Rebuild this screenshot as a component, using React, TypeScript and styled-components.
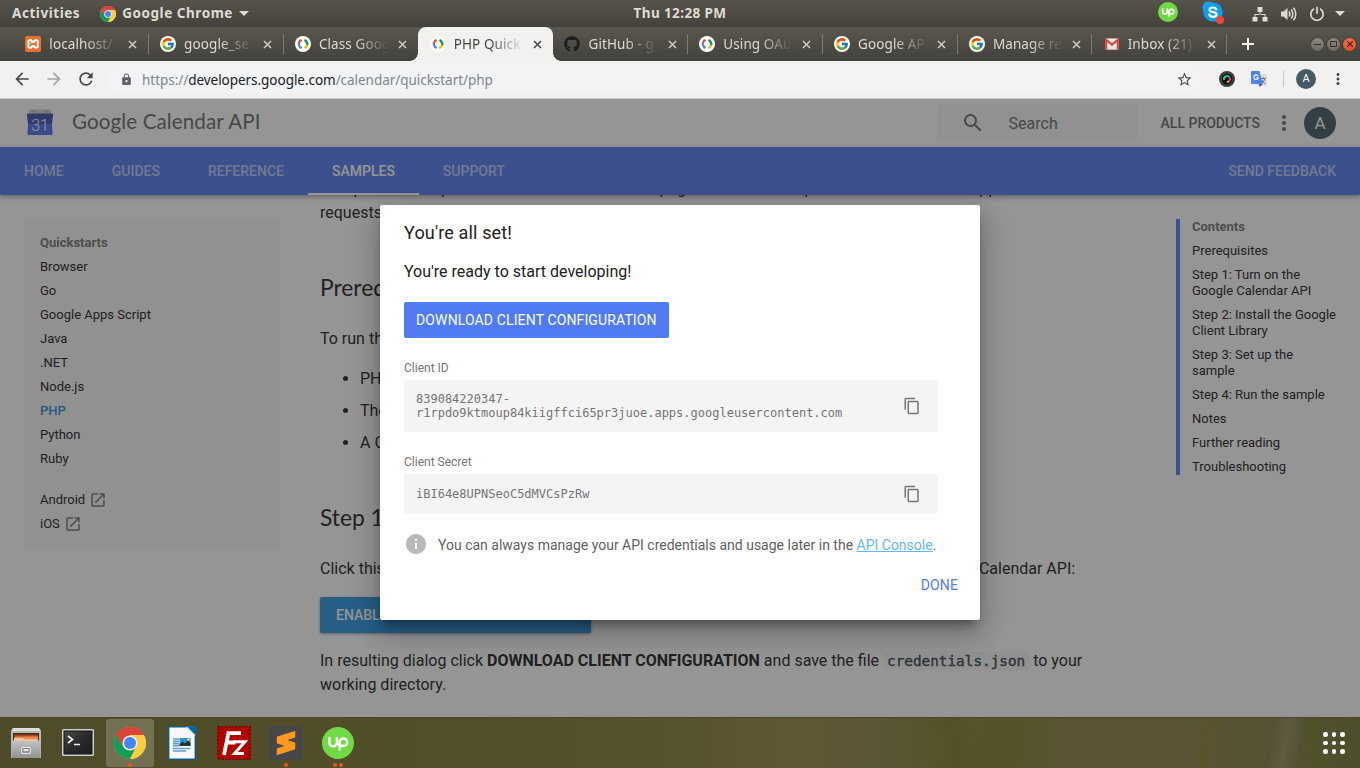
import React from 'react';
import styled, { createGlobalStyle, css } from 'styled-components';
import {
  MdArrowBack, MdArrowForward, MdContentCopy, MdInfo, MdLock, MdMoreVert,
  MdOpenInNew, MdRefresh, MdSearch, MdStarBorder,
} from 'react-icons/md';
import { FcGoogle } from 'react-icons/fc';
import { FaGithub } from 'react-icons/fa';
import { SiSublimetext, SiXampp } from 'react-icons/si';

const GlobalStyle = createGlobalStyle`
  * { box-sizing: border-box; }
  body { margin: 0; overflow: hidden; }
  svg { display: block; flex: none; }
`;

const uiFont = '"Noto Sans", "Open Sans", sans-serif';
const headingFont = 'Lato, Roboto, sans-serif';

const Desktop = styled.div`
  width: 1360px;
  height: 768px;
  display: flex;
  flex-direction: column;
  overflow: hidden;
  font-family: Roboto, sans-serif;
`;

/* ---------- System bar ---------- */

const SystemBar = styled.header`
  flex: none;
  height: 27px;
  display: grid;
  grid-template-columns: 1fr auto 1fr;
  align-items: center;
  background: linear-gradient(#56534b, #44423c);
  color: #dfdbd2;
  font: 700 13.5px/27px ${uiFont};
  white-space: nowrap;
`;

const SystemMenu = styled.div`
  display: flex;
  align-items: center;
  padding-left: 12px;
`;

const SystemLabel = styled.span<{ $spacing?: number }>`
  letter-spacing: ${p => p.$spacing ?? 0.5}px;
`;

const AppMenu = styled.div`
  display: flex;
  align-items: center;
  margin-left: 20px;
  gap: 6px;
`;

const Caret = styled.i`
  border: 5px solid transparent;
  border-top-color: #dfdbd2;
  border-bottom: 0;
`;

const SystemTray = styled.div`
  display: flex;
  align-items: center;
  justify-content: flex-end;
  padding-right: 15px;
`;

const TrayItem = styled.span<{ $gap: number; $raise?: number }>`
  display: flex;
  margin-left: ${p => p.$gap}px;
  padding-bottom: ${p => p.$raise ?? 0}px;
`;

/* ---------- Tabs ---------- */

const TabStrip = styled.div`
  flex: none;
  height: 34px;
  display: flex;
  align-items: stretch;
  padding-left: 14px;
  background: linear-gradient(#59574e, #43413c);
`;

const BrowserTab = styled.div<{ $active?: boolean; $divider?: boolean }>`
  position: relative;
  flex: none;
  width: 134.8px;
  display: flex;
  align-items: center;
  padding-left: 11.3px;
  color: #dfdbd2;
  font: 13.5px/34px ${uiFont};
  ${p => p.$divider && css`
    background: linear-gradient(#7d7b74, #7d7b74) right 0 top 7px / 1px 20px no-repeat;
  `}
  ${p => p.$active && css`
    background: #f2f1f0;
    color: #46443f;
    border-radius: 8px 8px 0 0;
    &::before, &::after {
      content: '';
      position: absolute;
      bottom: 0;
      width: 8px;
      height: 8px;
    }
    &::before { left: -8px; background: radial-gradient(circle at 0 0, transparent 7.5px, #f2f1f0 8px); }
    &::after { right: -8px; background: radial-gradient(circle at 100% 0, transparent 7.5px, #f2f1f0 8px); }
  `}
`;

const TabTitle = styled.span`
  width: 72px;
  margin-left: 8px;
  white-space: nowrap;
  letter-spacing: .1px;
  mask-image: linear-gradient(90deg, #000 50%, transparent 97%);
`;

const TabClose = styled.span`
  display: flex;
  margin-left: 7.2px;
`;

const Favicon = styled.span<{ $round?: boolean }>`
  flex: none;
  width: 16px;
  height: 16px;
  display: flex;
  align-items: center;
  justify-content: center;
  ${p => p.$round && css`background: #fff; border-radius: 50%;`}
`;

const NewTab = styled.div`
  display: flex;
  align-items: center;
  margin-left: 14.5px;
`;

const WindowControls = styled.div`
  display: flex;
  align-items: center;
  gap: 3px;
  margin-left: auto;
  padding-right: 4px;
`;

const WindowButton = styled.span<{ $close?: boolean }>`
  width: 13px;
  height: 13px;
  display: flex;
  align-items: center;
  justify-content: center;
  border-radius: 50%;
  background: ${p => (p.$close ? 'linear-gradient(#f46d4b, #e2502b)' : 'linear-gradient(#8b897f, #6c6a62)')};
  box-shadow: 0 0 0 .5px #33322d;
`;

/* ---------- Toolbar ---------- */

const Toolbar = styled.div`
  flex: none;
  height: 38px;
  display: flex;
  align-items: center;
  padding: 0 12px 1px 12px;
  background: #f2f1f0;
  border-bottom: 1px solid #c6c8c9;
`;

const NavButton = styled.span`
  display: flex;
  width: 32px;
`;

const AddressBar = styled.div`
  display: flex;
  align-items: center;
  flex: none;
  width: 1094px;
  height: 28px;
  border-radius: 14px;
  background: #f1f3f4;
  padding: 0 9px 0 12px;
  color: #80868b;
  font: 13.5px/28px ${uiFont};
`;

const Url = styled.span`
  margin-left: 9px;
  padding-top: 2px;
  flex: 1;
  letter-spacing: -.04px;
  b { font-weight: 400; color: #202124; }
`;

const Extensions = styled.div`
  display: flex;
  align-items: center;
  margin-left: 17px;
  flex: 1;
`;

const ToolbarRule = styled.i`
  width: 1px;
  height: 16px;
  background: #c9cacb;
  margin: 0 12px 0 16px;
`;

const Avatar = styled.span<{ $size: number; $font: number }>`
  flex: none;
  width: ${p => p.$size}px;
  height: ${p => p.$size}px;
  border-radius: 50%;
  background: #455a64;
  color: #fff;
  text-align: center;
  font: ${p => p.$font}px/${p => p.$size}px Roboto, sans-serif;
`;

/* ---------- Documentation page ---------- */

const Page = styled.div`
  position: relative;
  flex: none;
  height: 618px;
  display: flex;
  flex-direction: column;
  overflow: hidden;
  background: #fff;
  color: #212121;
`;

const ProductHeader = styled.div`
  flex: none;
  height: 48px;
  display: flex;
  align-items: center;
  padding: 0 24px;
`;

const ProductTitle = styled.h1`
  margin: 0 auto 0 16px;
  color: #6a6a6a;
  font: 400 20.6px/45px ${headingFont};
  letter-spacing: .1px;
  padding-bottom: 3px;
`;

const SearchBox = styled.div`
  width: 200px;
  height: 36px;
  display: flex;
  align-items: center;
  padding-left: 24px;
  gap: 24px;
  background: #f7f7f7;
  color: #6a6a6a;
  font-size: 16px;
`;

const AllProducts = styled.span`
  margin: 0 12px 0 24px;
  color: #6a6a6a;
  font-size: 14px;
  font-weight: 500;
`;

const NavBar = styled.nav`
  position: relative;
  z-index: 1;
  flex: none;
  height: 48px;
  display: flex;
  background: #577bf1;
  box-shadow: 0 2px 5px rgba(0, 0, 0, .35);
`;

const NavTab = styled.a<{ $active?: boolean; $end?: boolean }>`
  height: 48px;
  padding: 0 24px;
  color: ${p => (p.$active ? '#fff' : 'rgba(255, 255, 255, .6)')};
  font-size: 14px;
  font-weight: 500;
  line-height: 49px;
  ${p => p.$active && css`box-shadow: inset 0 -2px #fff;`}
  ${p => p.$end && css`margin-left: auto;`}
`;

const Body = styled.div`
  flex: 1;
  min-height: 0;
  display: flex;
  align-items: flex-start;
  padding: 0 24px;
`;

const SideNav = styled.aside`
  width: 256px;
  margin-top: 24px;
  padding: 12px 16px 12px;
  background: #f7f7f7;
  font-size: 13px;
  line-height: 24px;
`;

const SideHeading = styled.div`
  color: #757575;
  font-weight: 700;
`;

const SideItem = styled.div<{ $active?: boolean; $spaced?: boolean }>`
  display: flex;
  align-items: center;
  gap: 4px;
  ${p => p.$active && css`color: #1a92dc; font-weight: 500;`}
  ${p => p.$spaced && css`margin-top: 17px;`}
  svg { color: #757575; }
`;

const Article = styled.main`
  width: 808px;
  margin: -18px 0 0 40px;
  font-size: 16px;
  line-height: 24px;
  p { margin: 0; }
`;

const Intro = styled.p`
  white-space: nowrap;
`;

const SectionTitle = styled.h2`
  margin: 46px 0 24px;
  font: 400 22.8px/32px ${headingFont};
`;

const BulletList = styled.ul`
  margin: 16px 0;
  padding-left: 40px;
  li + li { margin-top: 8px; }
`;

const EnableButton = styled.div`
  width: 271px;
  height: 36px;
  margin: 16px 0;
  padding: 0 16px;
  border-radius: 2px;
  background: #2c98e4;
  color: #fff;
  font-size: 14px;
  font-weight: 500;
  line-height: 36px;
  white-space: nowrap;
  box-shadow: 0 1px 3px rgba(0, 0, 0, .4);
`;

const Code = styled.code`
  padding: 1px 4px;
  background: #f7f7f7;
  color: #37474f;
  font: 14.35px/20px "DejaVu Sans Mono", monospace;
  -webkit-text-stroke: .4px #37474f;
`;

const Contents = styled.aside`
  width: 160px;
  margin: 24px 0 0 auto;
  padding-left: 12px;
  border-left: 4px solid #577bf1;
  display: flex;
  flex-direction: column;
  gap: 8px;
  font-size: 13px;
  line-height: 16px;
  b { color: #757575; }
`;

/* ---------- Dialog ---------- */

const Scrim = styled.div`
  position: absolute;
  inset: 0;
  z-index: 2;
  display: flex;
  justify-content: center;
  align-items: flex-start;
  padding-top: 106px;
  background: rgba(33, 33, 33, .48);
`;

const Dialog = styled.section`
  width: 600px;
  height: 415px;
  padding: 16px 22px 0 24px;
  border-radius: 2px;
  background: #fff;
  box-shadow: 0 16px 24px 2px rgba(0, 0, 0, .14), 0 6px 30px 5px rgba(0, 0, 0, .12), 0 8px 10px -5px rgba(0, 0, 0, .4);
  display: flex;
  flex-direction: column;
  align-items: flex-start;
`;

const DialogTitle = styled.div`
  font-size: 18px;
  line-height: 24px;
  letter-spacing: .15px;
`;

const DialogLead = styled.div`
  margin: 15px 0 18px;
  font-size: 16px;
  line-height: 24px;
`;

const PrimaryButton = styled.div`
  height: 36px;
  padding: 0 12px;
  border-radius: 2px;
  background: #507bf3;
  color: #fff;
  font-size: 14px;
  line-height: 37px;
  letter-spacing: .13px;
`;

const FieldLabel = styled.div`
  margin-top: 22px;
  color: #757575;
  font-size: 12px;
  line-height: 16px;
`;

const Field = styled.div<{ $height: number }>`
  width: 534px;
  height: ${p => p.$height}px;
  margin-top: 4px;
  padding: 0 17px 0 12px;
  display: flex;
  align-items: center;
  justify-content: space-between;
  border-radius: 3px;
  background: #f4f4f4;
  color: #757575;
  font: 12px/14px "DejaVu Sans Mono", monospace;
`;

const Note = styled.div`
  display: flex;
  align-items: center;
  gap: 10px;
  margin-top: 18px;
  height: 24px;
  color: #616161;
  font-size: 14px;
  svg { color: #b9b9b9; }
  span { padding-top: 2px; }
  a { color: #64b9f4; text-decoration: underline; }
`;

const DoneButton = styled.div`
  align-self: flex-end;
  margin-top: 17px;
  color: #507bf3;
  font-size: 14px;
  line-height: 24px;
  letter-spacing: .1px;
`;

/* ---------- Dock ---------- */

const Dock = styled.footer`
  flex: 1;
  display: flex;
  align-items: center;
  padding: 0 10px 0 2px;
  gap: 4px;
  border-top: 1px solid #47452b;
  background:
    linear-gradient(100deg, transparent 93.2%, rgba(107, 98, 78, .5) 94.2%, transparent 95.4%),
    linear-gradient(80deg, transparent 95.5%, rgba(78, 84, 35, .6) 96.5%, transparent 97.5%),
    linear-gradient(100deg, transparent 87.5%, rgba(91, 83, 31, .5) 88.5%, transparent 89.5%),
    linear-gradient(75deg, transparent 68%, rgba(80, 82, 36, .5) 70%, transparent 72%),
    linear-gradient(105deg, transparent 71%, rgba(82, 83, 36, .35) 74.5%, transparent 77%),
    linear-gradient(90deg, #4f4c2a 0%, #514f29 30%, #55522c 48%, #5f5833 58%, #5b5637 64%, #565329 70%, #5a5433 80%, #5a5436 88%, #555234 94%, #4e4d2b 100%);
`;

const DockItem = styled.div<{ $active?: boolean }>`
  position: relative;
  width: 48px;
  height: 48px;
  display: flex;
  align-items: center;
  justify-content: center;
  border-radius: 3px;
  background: ${p => (p.$active ? 'rgba(255, 255, 255, .2)' : 'none')};
`;

const RunningDots = styled.span`
  position: absolute;
  left: 0;
  right: 0;
  bottom: 0;
  display: flex;
  justify-content: center;
  gap: 2px;
  i { width: 4px; height: 4px; border-radius: 50%; background: #e95420; }
`;

const AppGrid = styled.div`
  display: grid;
  grid-template-columns: repeat(3, 4.6px);
  gap: 4px;
  margin-left: auto;
  padding: 0 5px 0 0;
  i { width: 4.6px; height: 4.6px; border-radius: 50%; background: #fff; }
`;

/* ---------- Drawings ---------- */

const ChromeLogo = ({ size }: { size: number }) => (
  <svg width={size} height={size} viewBox="0 0 48 48">
    <circle cx="24" cy="24" r="24" fill="#fcc934" />
    <path d="M3.2 12A24 24 0 0 1 44.8 12L24 13 14.5 29.5Z" fill="#db4437" />
    <path d="M3.2 12A24 24 0 0 0 24 48L33.5 29.5 14.5 29.5Z" fill="#0f9d58" />
    <path d="M44.8 12A24 24 0 0 1 24 48L33.5 29.5 24 13.5V12Z" fill="#fdcd40" />
    <path d="M24 12H44.8A24 24 0 0 0 3.2 12L13.6 30Z" fill="#db4437" />
    <circle cx="24" cy="24" r="11.4" fill="#f1f1f1" />
    <circle cx="24" cy="24" r="9" fill="#4285f4" />
  </svg>
);

const DevelopersIcon = () => (
  <Favicon $round>
    <svg width="12" height="10" viewBox="0 0 12 10" fill="none" strokeWidth="2.1">
      <path d="M4.6 1 3 1.8 1.5 5" stroke="#ea4335" />
      <path d="M1.5 4.6 3 8 4.6 9" stroke="#4285f4" />
      <path d="M7.4 1 9 1.8 10.5 5" stroke="#0f9d58" />
      <path d="M10.5 4.8 9 8 7.4 9" stroke="#fbbc05" />
      <path d="M8.6 1.400 10.5 5 10 6.200" stroke="#0f9d58" />
    </svg>
  </Favicon>
);

const GoogleIcon = () => (
  <Favicon $round><FcGoogle size={14} /></Favicon>
);

const XamppIcon = () => (
  <svg width="16" height="16" viewBox="0 0 16 16">
    <rect x=".5" y=".5" width="15" height="15" rx="2" fill="#fff" />
    <SiXampp size={16} color="#ee6f2d" />
  </svg>
);

const GmailIcon = () => (
  <svg width="16" height="16" viewBox="0 0 16 16">
    <rect x="1" y="2.500" width="14" height="11" rx="1" fill="#f2f2f2" />
    <path d="M3 13.500 8 8l5 5.500z" fill="#dcdcdc" />
    <path d="M2.200 13.500V3.800L8 8.600l5.800-4.800v9.700" fill="none" stroke="#dc4538" strokeWidth="2.200" />
  </svg>
);

const UpworkIcon = ({ size }: { size: number }) => (
  <svg width={size} height={size} viewBox="0 0 32 32">
    <circle cx="16" cy="16" r="16" fill="#6fda44" />
    <path d="M7.500 11v4.700a3.700 3.700 0 0 0 7.400 0V11M17.600 22.500v-7.200a3.800 3.800 0 1 1 3.800 3.800c-2.300 0-4.300-1.300-5.300-3.200" fill="none" stroke="#fff" strokeWidth="2.500" strokeLinecap="round" />
  </svg>
);

const SkypeIcon = () => (
  <svg width="22" height="23" viewBox="0 0 22 23">
    <circle cx="6.500" cy="6.500" r="6" fill="#12a5f4" />
    <circle cx="14.500" cy="14.500" r="6.500" fill="#0078d4" />
    <circle cx="11" cy="11" r="9.600" fill="#0d9fec" />
    <path d="M14.300 8.300c-.6-1.300-1.800-1.800-3.400-1.800-1.800 0-3.300.8-3.300 2.300 0 3.300 7 1.400 7 4.500 0 1.600-1.600 2.500-3.500 2.500-1.900 0-3.300-.8-3.800-2.200" fill="none" stroke="#fff" strokeWidth="2.200" strokeLinecap="round" />
    <circle cx="18" cy="19" r="4" fill="#f44336" />
  </svg>
);

const NetworkIcon = () => (
  <svg width="16" height="16" viewBox="0 0 16 16" fill="#dfdbd2">
    <path d="M5.500 1h5v5h-5zM.5 11h5v4.500h-5zM10.500 11h5v4.500h-5zM2.500 8h11v3.500h-1V9h-4V6h-1v3h-4v2.500h-1z" />
  </svg>
);

const VolumeIcon = () => (
  <svg width="17" height="16" viewBox="0 0 17 16" fill="none" stroke="#dfdbd2" strokeWidth="1.500">
    <path d="M1 5.500h2.500L7.500 2v12l-4-3.500H1z" fill="#dfdbd2" stroke="none" />
    <path d="M9 5.500c1 1.400 1 3.600 0 5M11.200 3.600c2.200 2.400 2.200 6.400 0 8.800M13.400 1.800c3.200 3.400 3.200 9 0 12.400" />
  </svg>
);

const PowerIcon = () => (
  <svg width="16" height="16" viewBox="0 0 16 16" fill="none" stroke="#dfdbd2" strokeWidth="1.700">
    <path d="M5 2.700a6.200 6.200 0 1 0 6 0M8 .8v7" />
  </svg>
);

const CloseGlyph = ({ color }: { color: string }) => (
  <svg width="9" height="9" viewBox="0 0 9 9">
    <path d="M1 1l7 7M8 1L1 8" stroke={color} strokeWidth="1.500" />
  </svg>
);

const CalendarLogo = () => (
  <svg width="32" height="32" viewBox="0 0 32 32">
    <path d="M5 3.500 Q5 2.500 6 2.500H26Q27 2.500 27 3.500V8H5z" fill="#d0d0d0" />
    <circle cx="9.500" cy="4.500" r=".9" fill="#9e9e9e" />
    <circle cx="22.500" cy="4.500" r=".9" fill="#9e9e9e" />
    <path d="M4 6.500h24q1.200 0 1.100 1.200L28 17H4L2.900 7.700Q2.800 6.500 4 6.500z" fill="#3f51b5" />
    <path d="M4 17h24l.6 9.800q0 1.200-1.200 1.200H4.600q-1.200 0-1.200-1.200z" fill="#5270ee" />
    <text x="16" y="23.500" textAnchor="middle" fill="#fff" fontFamily="Roboto" fontSize="16" fontWeight="300">31</text>
  </svg>
);

const ColorCameraIcon = () => (
  <svg width="16" height="16" viewBox="0 0 16 16">
    <circle cx="8" cy="8" r="8" fill="#3b3e42" />
    <circle cx="8" cy="8" r="5.200" fill="#08090b" />
    <g fill="none" strokeWidth="2">
      <path d="M5.200 9a3 3 0 0 1 1.800-3.800" stroke="#32d64b" />
      <path d="M7 5.200a3 3 0 0 1 3.500 1.100" stroke="#22a8e8" />
      <path d="M10.500 6.300A3 3 0 0 1 10 10.200" stroke="#e93a6a" />
      <path d="M10 10.200a3 3 0 0 1-2 .7" stroke="#e8c51e" />
    </g>
  </svg>
);

const TranslateIcon = () => (
  <svg width="16" height="16" viewBox="0 0 16 16">
    <rect x="6" y="3" width="10" height="12" rx="1" fill="#dcdcdc" />
    <path d="M9.500 7.500h5.500M12.200 6v1.500M10.500 12.500c2-1 3-2.800 3.300-5M10.800 9c.8 1.800 2 3 3.700 3.600" stroke="#607d8b" strokeWidth="1.100" fill="none" />
    <path d="M1 0h7.500l3 13H1q-1 0-1-1V1q0-1 1-1z" fill="#4e82ee" />
    <path d="M8 13h3.500L8.800 16z" fill="#3a3fc0" />
    <path d="M7 4.800A2.300 2.300 0 1 0 7.400 6.700H5.200" stroke="#fff" strokeWidth="1.100" fill="none" />
  </svg>
);

const FilesIcon = () => (
  <svg width="32" height="34" viewBox="0 0 32 34">
    <defs>
      <linearGradient id="cabinet" x2="0" y2="1"><stop stopColor="#c4c4c4" /><stop offset="1" stopColor="#929292" /></linearGradient>
    </defs>
    <path d="M3 2h26l2 3v27H1V5z" fill="#b9b9b6" />
    <path d="M3 2h26l1.500 3h-29z" fill="#deded9" />
    <rect x="3" y="7" width="26" height="8" fill="#3a2d26" />
    <path d="M4 8.500h24v7H4z" fill="#a8441b" />
    <path d="M5 10.500h23v5H5z" fill="#f08a4a" />
    <path d="M4 12h9l1 1.200h14v3H4z" fill="#f7c7a2" />
    <rect x="1.500" y="14.500" width="29" height="17.500" rx="1" fill="url(#cabinet)" />
    <rect x="11.800" y="21.500" width="8.400" height="5.800" rx="1" fill="#777" stroke="#ececec" strokeWidth="1.200" />
    <rect x="13.500" y="23" width="5" height="2.300" fill="#e8e8e8" />
  </svg>
);

const TerminalIcon = () => (
  <svg width="32" height="28" viewBox="0 0 32 28">
    <defs>
      <linearGradient id="screen" x2="1" y2="1"><stop stopColor="#4b4b4b" /><stop offset=".5" stopColor="#2a2a2a" /><stop offset="1" stopColor="#1d1d1d" /></linearGradient>
    </defs>
    <rect width="32" height="27" rx="1.500" fill="#cfcfcd" />
    <rect x="2" y="2" width="28" height="23" fill="url(#screen)" stroke="#111" />
    <path d="M6 7l4.500 3.500L6 14M12 15.500h6" fill="none" stroke="#f0f0f0" strokeWidth="1.700" />
  </svg>
);

const WriterIcon = () => (
  <svg width="28" height="34" viewBox="0 0 28 34">
    <path d="M.7.700h18.500L27.300 9v24.300H.7z" fill="#f8f8f8" stroke="#0b5c8e" strokeWidth="1.400" />
    <path d="M18.500 0H28v10z" fill="#0469a8" />
    <path d="M18.500 1L27 9.500" stroke="#cfe3ef" strokeWidth="1.200" />
    <path d="M5 13h6M5 15.200h6M5 17.400h6M5 19.600h6M5 22.500h17.500M5 25h13" stroke="#5f9fca" strokeWidth="1.600" />
    <rect x="11.500" y="12" width="11" height="8" fill="#2f93d4" />
    <path d="M11.500 18.500l3-3 2.500 2 3-3 2.500 2.500V20h-11z" fill="#26352c" />
    <circle cx="20.500" cy="13.500" r="1.300" fill="#f7d547" />
  </svg>
);

const FilezillaIcon = () => (
  <svg width="34" height="34" viewBox="0 0 34 34">
    <rect x=".8" y=".8" width="32.400" height="32.400" fill="#b30000" stroke="#7e0000" strokeWidth="1.600" strokeDasharray="2 1.500" />
    <path d="M10 7.200h14M11.800 5.300 7 28.800M9.500 16.500h9" fill="none" stroke="#fff" strokeWidth="3.800" />
    <path d="M16.500 15.800h11.500L17.500 27.500h9.500" fill="none" stroke="#fff" strokeWidth="3" />
  </svg>
);

const SublimeIcon = () => (
  <svg width="34" height="34" viewBox="0 0 34 34">
    <rect width="34" height="34" rx="2" fill="#474747" />
    <SiSublimetext x="5" y="5" size={24} color="#ff9a1f" />
  </svg>
);

/* ---------- Data ---------- */

const browserTabs: { title: string; icon: React.ReactNode; active?: boolean; divider?: boolean }[] = [
  { title: 'localhost/', icon: <XamppIcon />, divider: true },
  { title: 'google_se', icon: <GoogleIcon />, divider: true },
  { title: 'Class Goog', icon: <DevelopersIcon /> },
  { title: 'PHP Quick', icon: <DevelopersIcon />, active: true },
  { title: 'GitHub - g', icon: <FaGithub size={16} color="#1d1d1b" />, divider: true },
  { title: 'Using OAu', icon: <DevelopersIcon />, divider: true },
  { title: 'Google AP', icon: <GoogleIcon />, divider: true },
  { title: 'Manage re', icon: <GoogleIcon />, divider: true },
  { title: 'Inbox (21)', icon: <GmailIcon />, divider: true },
];

const navTabs = ['HOME', 'GUIDES', 'REFERENCE', 'SAMPLES', 'SUPPORT'];
const quickstarts = ['Browser', 'Go', 'Google Apps Script', 'Java', '.NET', 'Node.js', 'PHP', 'Python', 'Ruby'];
const contents = [
  'Prerequisites', 'Step 1: Turn on the Google Calendar API', 'Step 2: Install the Google Client Library',
  'Step 3: Set up the sample', 'Step 4: Run the sample', 'Notes', 'Further reading', 'Troubleshooting',
];

const dockItems: { icon: React.ReactNode; active?: boolean; windows?: number }[] = [
  { icon: <FilesIcon /> },
  { icon: <TerminalIcon /> },
  { icon: <ChromeLogo size={32} />, active: true, windows: 1 },
  { icon: <WriterIcon /> },
  { icon: <FilezillaIcon /> },
  { icon: <SublimeIcon />, windows: 1 },
  { icon: <UpworkIcon size={32} />, windows: 2 },
];

export default function App() {
  return (
    <Desktop>
      <GlobalStyle />
      <SystemBar>
        <SystemMenu>
          <SystemLabel $spacing={0.55}>Activities</SystemLabel>
          <AppMenu>
            <ChromeLogo size={16} />
            <SystemLabel $spacing={0.55}>Google Chrome</SystemLabel>
            <Caret />
          </AppMenu>
        </SystemMenu>
        <SystemLabel $spacing={0.4}>Thu 12:28 PM</SystemLabel>
        <SystemTray>
          <TrayItem $gap={0} $raise={3}><UpworkIcon size={20} /></TrayItem>
          <TrayItem $gap={24} $raise={2}><SkypeIcon /></TrayItem>
          <TrayItem $gap={28}><NetworkIcon /></TrayItem>
          <TrayItem $gap={12}><VolumeIcon /></TrayItem>
          <TrayItem $gap={12}><PowerIcon /></TrayItem>
          <TrayItem $gap={10}><Caret /></TrayItem>
        </SystemTray>
      </SystemBar>

      <TabStrip>
        {browserTabs.map(t => (
          <BrowserTab key={t.title} $active={t.active} $divider={t.divider}>
            <Favicon>{t.icon}</Favicon>
            <TabTitle>{t.title}</TabTitle>
            <TabClose><CloseGlyph color={t.active ? '#46443f' : '#d0ccc3'} /></TabClose>
          </BrowserTab>
        ))}
        <NewTab>
          <svg width="12" height="12" viewBox="0 0 12 12"><path d="M6 0v12M0 6h12" stroke="#f2f1f0" strokeWidth="2" /></svg>
        </NewTab>
        <WindowControls>
          <WindowButton><svg width="7" height="7"><path d="M0 3.500h7" stroke="#33322d" /></svg></WindowButton>
          <WindowButton><svg width="7" height="6"><path d="M.5.500h6v5h-6z" stroke="#33322d" fill="none" /></svg></WindowButton>
          <WindowButton $close><svg width="6" height="6"><path d="M0 0l6 6M6 0L0 6" stroke="#4a1a0d" strokeWidth="1.200" /></svg></WindowButton>
        </WindowControls>
      </TabStrip>

      <Toolbar>
        <NavButton><MdArrowBack size={20} color="#4a4a48" /></NavButton>
        <NavButton><MdArrowForward size={20} color="#a5a5a3" /></NavButton>
        <NavButton><MdRefresh size={20} color="#4a4a48" /></NavButton>
        <AddressBar>
          <MdLock size={13} color="#5f6368" />
          <Url>https://<b>developers.google.com</b>/calendar/quickstart/php</Url>
          <MdStarBorder size={17} color="#505357" />
        </AddressBar>
        <Extensions>
          <ColorCameraIcon />
          <TrayItem $gap={16}><TranslateIcon /></TrayItem>
          <ToolbarRule />
          <Avatar $size={20} $font={11}>A</Avatar>
          <TrayItem $gap={13}><MdMoreVert size={18} color="#4a4a48" /></TrayItem>
        </Extensions>
      </Toolbar>

      <Page>
        <ProductHeader>
          <CalendarLogo />
          <ProductTitle>Google Calendar API</ProductTitle>
          <SearchBox><MdSearch size={24} />Search</SearchBox>
          <AllProducts>ALL PRODUCTS</AllProducts>
          <MdMoreVert size={24} color="#6a6a6a" />
          <TrayItem $gap={8}><Avatar $size={32} $font={17}>A</Avatar></TrayItem>
        </ProductHeader>
        <NavBar>
          {navTabs.map(t => <NavTab key={t} $active={t === 'SAMPLES'}>{t}</NavTab>)}
          <NavTab $end>SEND FEEDBACK</NavTab>
        </NavBar>
        <Body>
          <SideNav>
            <SideHeading>Quickstarts</SideHeading>
            {quickstarts.map(q => <SideItem key={q} $active={q === 'PHP'}>{q}</SideItem>)}
            <SideItem $spaced>Android <MdOpenInNew size={18} /></SideItem>
            <SideItem>iOS <MdOpenInNew size={18} /></SideItem>
          </SideNav>
          <Article>
            <Intro>
              Complete the steps described in the rest of this page to create a simple PHP command-line
              application that makes<br />requests to the Google Calendar API.
            </Intro>
            <SectionTitle>Prerequisites</SectionTitle>
            <p>To run this quickstart, you&apos;ll need:</p>
            <BulletList>
              <li>PHP 5.4 or greater</li>
              <li>The Composer dependency management tool</li>
              <li>A Google account with Google Calendar enabled</li>
            </BulletList>
            <SectionTitle>Step 1: Turn on the Google Calendar API</SectionTitle>
            <p>Click this button to create a new Cloud Platform project and automatically enable the Google Calendar API:</p>
            <EnableButton>ENABLE THE GOOGLE CALENDAR API</EnableButton>
            <p>
              In resulting dialog click <b>DOWNLOAD CLIENT CONFIGURATION</b> and save the
              file <Code>credentials.json</Code> to your<br />working directory.
            </p>
          </Article>
          <Contents>
            <b>Contents</b>
            {contents.map(c => <span key={c}>{c}</span>)}
          </Contents>
        </Body>

        <Scrim>
          <Dialog>
            <DialogTitle>You&apos;re all set!</DialogTitle>
            <DialogLead>You&apos;re ready to start developing!</DialogLead>
            <PrimaryButton>DOWNLOAD CLIENT CONFIGURATION</PrimaryButton>
            <FieldLabel>Client ID</FieldLabel>
            <Field $height={52}>
              <span>839084220347-<br />r1rpdo9ktmoup84kiigffci65pr3juoe.apps.googleusercontent.com</span>
              <MdContentCopy size={18} />
            </Field>
            <FieldLabel>Client Secret</FieldLabel>
            <Field $height={40}>
              <span>iBI64e8UPNSeoC5dMVCsPzRw</span>
              <MdContentCopy size={18} />
            </Field>
            <Note>
              <MdInfo size={24} />
              <span>You can always manage your API credentials and usage later in the <a>API Console</a>.</span>
            </Note>
            <DoneButton>DONE</DoneButton>
          </Dialog>
        </Scrim>
      </Page>

      <Dock>
        {dockItems.map((d, i) => (
          <DockItem key={i} $active={d.active}>
            {d.icon}
            {d.windows && <RunningDots>{Array.from({ length: d.windows }, (_, n) => <i key={n} />)}</RunningDots>}
          </DockItem>
        ))}
        <AppGrid>{Array.from({ length: 9 }, (_, n) => <i key={n} />)}</AppGrid>
      </Dock>
    </Desktop>
  );
}
